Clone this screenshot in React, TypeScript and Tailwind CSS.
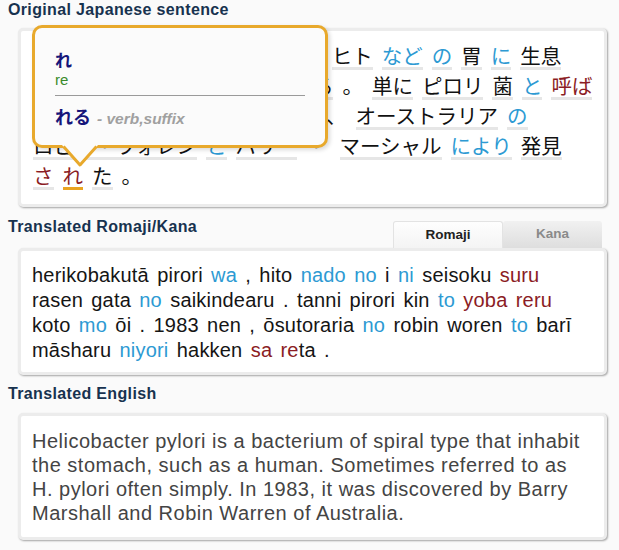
import React from "react";

type W = { t: string; c?: "k" | "p" | "v" | "x"; sel?: boolean; extra?: string };

const jp: W[][] = [
  [
    { t: "ヘリコバクター・ピロリ" },
    { t: "は", c: "p" },
    { t: "、", c: "x", extra: "ml-[6px]" },
    { t: "ヒト" },
    { t: "など", c: "p" },
    { t: "の", c: "p" },
    { t: "胃" },
    { t: "に", c: "p" },
    { t: "生息" },
  ],
  [
    { t: "する", c: "v" },
    { t: "らせん" },
    { t: "型" },
    { t: "の", c: "p" },
    { t: "細菌" },
    { t: "である", extra: "ml-[10px]" },
    { t: "。", c: "x" },
    { t: "単に" },
    { t: "ピロリ" },
    { t: "菌" },
    { t: "と", c: "p" },
    { t: "呼ば", c: "v" },
  ],
  [
    { t: "れる", c: "v" },
    { t: "こと" },
    { t: "も", c: "p" },
    { t: "多い" },
    { t: "。", c: "x" },
    { t: "1983" },
    { t: "年" },
    { t: "、", c: "x" },
    { t: "オーストラリア" },
    { t: "の", c: "p" },
  ],
  [
    { t: "ロビン・ウォレン" },
    { t: "と", c: "p" },
    { t: "バリー" },
    { t: "・", c: "x", extra: "mr-[13px]" },
    { t: "マーシャル" },
    { t: "により", c: "p" },
    { t: "発見" },
  ],
  [
    { t: "さ", c: "v" },
    { t: "れ", c: "v", sel: true },
    { t: "た" },
    { t: "。", c: "x" },
  ],
];

function Word({ w }: { w: W }) {
  const color =
    w.c === "p" ? "text-[#2d9ad3]" : w.c === "v" ? "text-[#8b1c24]" : "text-[#111111]";
  const under = w.sel
    ? "border-[#eaa421]"
    : w.c === "x"
    ? "border-transparent"
    : "border-[#e6e6e6]";
  return (
    <span
      className={`inline-block leading-[24px] border-b-[3px] ${w.extra ?? ""} ${
        w.extra && w.extra.startsWith("mr") ? "" : "mr-[9px]"
      } ${under} ${color}`}
    >
      {w.t}
    </span>
  );
}

const B = ({ children }: { children: React.ReactNode }) => (
  <span className="text-[#2d9ad3]">{children}</span>
);
const R = ({ children }: { children: React.ReactNode }) => (
  <span className="text-[#8b1c24]">{children}</span>
);

const heading =
  "text-[16px] tracking-[0.35px] font-bold leading-[18px] text-[#17324f] [font-family:'Liberation_Sans',Arial,sans-serif]";
const box =
  "ml-[18px] w-[589px] bg-white border-[3px] border-[#ececec] rounded-[5px] shadow-[1px_1px_2px_rgba(0,0,0,0.35)]";

export default function App() {
  return (
    <div className="relative w-[619px] h-[550px] bg-[#fafafa] overflow-hidden [font-family:'Liberation_Sans',Arial,sans-serif]">
      {/* Section 1 */}
      <div className={`${heading} ml-[8px] pt-[1px]`}>Original Japanese sentence</div>
      <div
        className={`${box} mt-[9px] h-[179px] pl-[12px] pt-[10px] text-[20.5px] [font-family:'Noto_Sans_CJK_JP','Noto_Sans',sans-serif]`}
      >
        {jp.map((line, i) => (
          <div key={i} className="flex items-center h-[30px] whitespace-nowrap">
            {line.map((w, j) => (
              <Word key={j} w={w} />
            ))}
          </div>
        ))}
      </div>

      {/* Section 2 */}
      <div className="flex items-start mt-[11px] h-[30px]">
        <div className={`${heading} ml-[8px]`}>Translated Romaji/Kana</div>
        <div className="ml-auto mr-[17px] mt-[3px] flex">
          <div className="w-[110px] h-[27px] flex items-center justify-center border border-b-0 border-[#e3e3e3] rounded-t-[3px] bg-gradient-to-b from-[#fefefe] to-[#f4f4f4] text-[13.5px] font-bold text-[#222222]">
            Romaji
          </div>
          <div className="w-[99px] h-[27px] flex items-center justify-center rounded-t-[3px] bg-gradient-to-b from-[#f1f1f1] to-[#dedede] text-[13.5px] font-bold text-[#8a8a8a]">
            Kana
          </div>
        </div>
      </div>
      <div
        className={`${box} h-[127px] pl-[11px] pt-[12px] text-[20px] tracking-[0.2px] [word-spacing:2.5px] leading-[25px] text-[#151515] whitespace-nowrap`}
      >
        herikobakutā pirori <B>wa</B> , hito <B>nado no</B> i <B>ni</B> seisoku{" "}
        <R>suru</R>
        <br />
        rasen gata <B>no</B> saikindearu . tanni pirori kin <B>to</B> <R>yoba reru</R>
        <br />
        koto <B>mo</B> ōi . 1983 nen , ōsutoraria <B>no</B> robin woren <B>to</B> barī
        <br />
        māsharu <B>niyori</B> hakken <R>sa re</R>ta .
      </div>

      {/* Section 3 */}
      <div className={`${heading} ml-[8px] mt-[10px]`}>Translated English</div>
      <div
        className={`${box} mt-[10px] h-[127px] pl-[11px] pt-[13px] text-[20px] tracking-[0.5px] leading-[24px] text-[#444444] whitespace-nowrap`}
      >
        Helicobacter pylori is a bacterium of spiral type that inhabit
        <br />
        the stomach, such as a human. Sometimes referred to as
        <br />
        H. pylori often simply. In 1983, it was discovered by Barry
        <br />
        Marshall and Robin Warren of Australia.
      </div>

      {/* Popup */}
      <div className="absolute left-[32px] top-[25px] w-[296px] h-[123px] border-[3px] border-[#e8a92c] rounded-[10px] bg-[#fbfbfb] shadow-[2px_2px_4px_rgba(0,0,0,0.15)] pl-[20px] pr-[20px] pt-[22px]">
        <div className="text-[17px] font-bold leading-[20px] text-[#16167a] [font-family:'Noto_Sans_CJK_JP',sans-serif]">
          れ
        </div>
        <div className="text-[15px] leading-[18px] text-[#3a8b2c] mt-[1px]">re</div>
        <div className="h-px bg-[#9a9a9a] mt-[6px]" />
        <div className="mt-[10px] leading-[20px] flex items-baseline whitespace-nowrap">
          <span className="text-[18px] font-bold text-[#16167a] [font-family:'Noto_Sans_CJK_JP',sans-serif]">
            れる
          </span>
          <span className="ml-[6px] text-[15.5px] italic font-bold text-[#a0a0a0]">
            - verb,suffix
          </span>
        </div>
      </div>
      <svg
        className="absolute left-[62px] top-[145px]"
        width="36"
        height="24"
        viewBox="0 0 36 24"
      >
        <path d="M0 0 H36 L18 20 Z" fill="#fbfbfb" />
        <path
          d="M1.5 1.5 L18 20 L34.5 1.5"
          fill="none"
          stroke="#e8a92c"
          strokeWidth="3"
          strokeLinejoin="round"
        />
      </svg>
    </div>
  );
}
